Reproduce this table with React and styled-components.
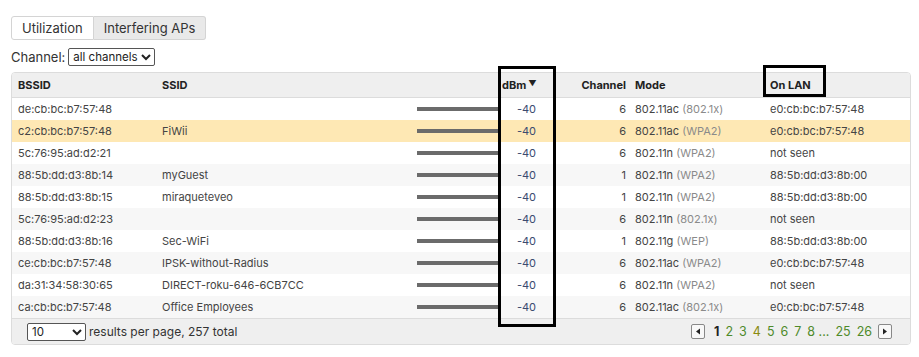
import React from "react";
import styled, { createGlobalStyle } from "styled-components";

const GlobalStyle = createGlobalStyle`
  body {
    margin: 0;
    background: #fff;
    font-family: Inter, "Noto Sans", sans-serif;
    color: #333;
  }
`;

const Page = styled.div`
  position: relative;
  padding: 16px 8px 0 11px;
  width: 900px;
`;

const Tabs = styled.div`
  display: flex;
  height: 24px;
`;

const Tab = styled.div`
  display: flex;
  align-items: center;
  padding: 0 ${(p) => (p.$first ? 10 : 10)}px;
  font-size: 13px;
  color: #333;
  border: 1px solid #d4d4d4;
  background: ${(p) => (p.$active ? "#e9e9e9" : "#fff")};
  border-radius: ${(p) => (p.$first ? "3px 0 0 3px" : "0 3px 3px 0")};
  border-left: ${(p) => (p.$first ? "1px solid #d4d4d4" : "none")};
`;

const ChannelRow = styled.div`
  display: flex;
  align-items: center;
  gap: 3px;
  margin-top: 8px;
  height: 18px;
  font-size: 13px;
  color: #333;
`;

const Select = styled.select`
  font-family: Inter, "Noto Sans", sans-serif;
  font-size: 11.5px;
  color: #222;
  height: 18px;
  padding: 0;
  border: 1px solid #555;
  border-radius: 2px;
  background: #fff;
  width: ${(p) => p.$w}px;
`;

const TableWrap = styled.div`
  margin-top: 6px;
  border: 1px solid #dcdcdc;
  border-radius: 4px;
  overflow: hidden;
  width: 898px;
`;

const Table = styled.table`
  border-collapse: collapse;
  table-layout: fixed;
  width: 100%;
  font-size: 11px;
`;

const Th = styled.th`
  height: 24px;
  padding: 0 ${(p) => (p.$right ? "5px" : "6px")} 0 ${(p) => p.$pl ?? 6}px;
  text-align: ${(p) => (p.$right ? "right" : "left")};
  font-weight: 700;
  color: #222;
  background: #efefef;
  border-bottom: 1px solid #dcdcdc;
  white-space: nowrap;
`;

const Tr = styled.tr`
  background: ${(p) => (p.$selected ? "#fee8b4" : p.$odd ? "#f7f7f7" : "#fff")};
`;

const Td = styled.td`
  height: 22px;
  padding: 0 ${(p) => p.$pr ?? 6}px 0 ${(p) => p.$pl ?? 6}px;
  text-align: ${(p) => (p.$right ? "right" : "left")};
  color: #444;
  white-space: nowrap;
  overflow: hidden;
`;

const Bar = styled.div`
  height: 4px;
  background: #6b6b6b;
  margin-left: auto;
  width: 82px;
`;

const Dbm = styled.span`
  color: #3b4a70;
`;

const Sec = styled.span`
  color: #8a8a8a;
`;

const Arrow = styled.span`
  font-size: 8px;
  vertical-align: 3px;
  margin-left: 2px;
`;

const Footer = styled.div`
  display: flex;
  align-items: center;
  justify-content: space-between;
  height: 25px;
  padding: 0 18px 0 15px;
  background: #efefef;
  border-top: 1px solid #dcdcdc;
  font-size: 12px;
  color: #333;
`;

const PerPage = styled.div`
  display: flex;
  align-items: center;
  gap: 3px;
`;

const Pager = styled.div`
  display: flex;
  align-items: center;
  gap: 6px;
  font-size: 12.5px;
`;

const PageBtn = styled.div`
  width: 12px;
  height: 13px;
  border: 1px solid #888;
  border-radius: 2px;
  background: #f8f8f8;
  display: flex;
  align-items: center;
  justify-content: center;
  margin: ${(p) => (p.$left ? "0 3px 0 0" : "0 0 0 0")};
`;

const PageLink = styled.span`
  color: ${(p) => (p.$current ? "#222" : p.$yellow ? "#8a8a10" : "#4e8a2a")};
  font-weight: ${(p) => (p.$current ? 700 : 400)};
`;

const Marker = styled.div`
  position: absolute;
  border: 3px solid #000;
  left: ${(p) => p.$x}px;
  top: ${(p) => p.$y}px;
  width: ${(p) => p.$w}px;
  height: ${(p) => p.$h}px;
  box-sizing: border-box;
  pointer-events: none;
`;

const rows = [
  ["de:cb:bc:b7:57:48", "", 6, "802.11ac", "802.1x", "e0:cb:bc:b7:57:48"],
  ["c2:cb:bc:b7:57:48", "FiWii", 6, "802.11ac", "WPA2", "e0:cb:bc:b7:57:48"],
  ["5c:76:95:ad:d2:21", "", 6, "802.11n", "WPA2", "not seen"],
  ["88:5b:dd:d3:8b:14", "myGuest", 1, "802.11n", "WPA2", "88:5b:dd:d3:8b:00"],
  ["88:5b:dd:d3:8b:15", "miraqueteveo", 1, "802.11n", "WPA2", "88:5b:dd:d3:8b:00"],
  ["5c:76:95:ad:d2:23", "", 6, "802.11n", "802.1x", "not seen"],
  ["88:5b:dd:d3:8b:16", "Sec-WiFi", 1, "802.11g", "WEP", "88:5b:dd:d3:8b:00"],
  ["ce:cb:bc:b7:57:48", "IPSK-without-Radius", 6, "802.11ac", "WPA2", "e0:cb:bc:b7:57:48"],
  ["da:31:34:58:30:65", "DIRECT-roku-646-6CB7CC", 6, "802.11n", "WPA2", "not seen"],
  ["ca:cb:bc:b7:57:48", "Office Employees", 6, "802.11ac", "802.1x", "e0:cb:bc:b7:57:48"],
];

const Tri = ({ dir }) => (
  <svg width="6" height="7" viewBox="0 0 6 7">
    {dir === "left" ? (
      <path d="M5 0.5 L1 3.5 L5 6.5 Z" fill="#222" />
    ) : (
      <path d="M1 0.5 L5 3.5 L1 6.5 Z" fill="#222" />
    )}
  </svg>
);

export default function App() {
  return (
    <>
      <GlobalStyle />
      <Page>
        <Tabs>
          <Tab $first>Utilization</Tab>
          <Tab $active>Interfering APs</Tab>
        </Tabs>
        <ChannelRow>
          Channel:
          <Select $w={87} defaultValue="all">
            <option value="all">all channels</option>
          </Select>
        </ChannelRow>
        <TableWrap>
          <Table>
            <colgroup>
              <col style={{ width: 144 }} />
              <col style={{ width: 255 }} />
              <col style={{ width: 88 }} />
              <col style={{ width: 58 }} />
              <col style={{ width: 74 }} />
              <col style={{ width: 133 }} />
              <col />
            </colgroup>
            <thead>
              <tr>
                <Th>BSSID</Th>
                <Th>SSID</Th>
                <Th />
                <Th $pl={3}>
                  dBm<Arrow>▼</Arrow>
                </Th>
                <Th $right>Channel</Th>
                <Th $pl={4}>Mode</Th>
                <Th>On LAN</Th>
              </tr>
            </thead>
            <tbody>
              {rows.map((r, i) => (
                <Tr key={r[0]} $selected={i === 1} $odd={i % 2 === 1}>
                  <Td>{r[0]}</Td>
                  <Td>{r[1]}</Td>
                  <Td $pr={1}>
                    <Bar />
                  </Td>
                  <Td $right $pr={21}>
                    <Dbm>-40</Dbm>
                  </Td>
                  <Td $right $pr={5}>{r[2]}</Td>
                  <Td $pl={4}>
                    {r[3]} <Sec>({r[4]})</Sec>
                  </Td>
                  <Td>{r[5]}</Td>
                </Tr>
              ))}
            </tbody>
          </Table>
          <Footer>
            <PerPage>
              <Select $w={59} defaultValue="10">
                <option value="10">10</option>
              </Select>
              results per page, 257 total
            </PerPage>
            <Pager>
              <PageBtn $left>
                <Tri dir="left" />
              </PageBtn>
              <PageLink $current>1</PageLink>
              <PageLink>2</PageLink>
              <PageLink>3</PageLink>
              <PageLink $yellow>4</PageLink>
              <PageLink>5</PageLink>
              <PageLink>6</PageLink>
              <PageLink>7</PageLink>
              <PageLink>8 ...</PageLink>
              <PageLink>25</PageLink>
              <PageLink>26</PageLink>
              <PageBtn>
                <Tri dir="right" />
              </PageBtn>
            </Pager>
          </Footer>
        </TableWrap>
        <Marker $x={498} $y={66} $w={58} $h={261} />
        <Marker $x={763} $y={65} $w={63} $h={32} />
      </Page>
    </>
  );
}
